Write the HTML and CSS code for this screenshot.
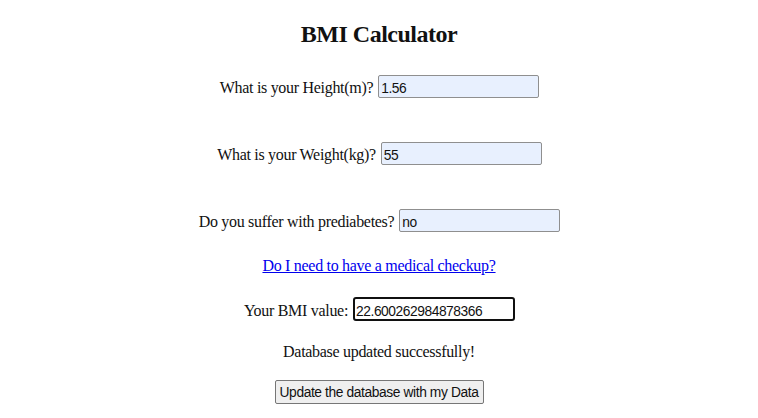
FILE: index.html
```html
<!DOCTYPE html>
<html lang="en">
<head>
<meta charset="utf-8">
<title>BMI Calculator</title>
<link rel="stylesheet" href="styles.css">
</head>
<body>
<h2 class="title">BMI Calculator</h2>
<form class="form">
  <div class="row row-height">
    <label class="label" for="height">What is your Height(m)?</label>
    <input class="field autofill" id="height" type="text" value="1.56">
  </div>
  <div class="row row-weight">
    <label class="label" for="weight">What is your Weight(kg)?</label>
    <input class="field autofill" id="weight" type="text" value="55">
  </div>
  <div class="row row-diab">
    <label class="label" for="diab">Do you suffer with prediabetes?</label>
    <input class="field autofill" id="diab" type="text" value="no">
  </div>
  <div class="line line-link"><a class="link" href="#">Do I need to have a medical checkup?</a></div>
  <div class="row row-bmi">
    <label class="label" for="bmi">Your BMI value:</label>
    <input class="field focused" id="bmi" type="text" value="22.600262984878366">
  </div>
  <div class="line line-msg">Database updated successfully!</div>
  <div class="line line-btn"><button class="btn" type="button">Update the database with my Data</button></div>
</form>
</body>
</html>
```
FILE: styles.css
```css
html, body {
  margin: 0;
  padding: 0;
  background: #ffffff;
}
body {
  font-family: "Liberation Serif", "Times New Roman", serif;
  font-size: 16px;
  letter-spacing: -0.3px;
  color: #111;
  padding-top: 20px;
}
.title {
  margin: 0;
  font-size: 24px;
  line-height: 28px;
  font-weight: bold;
  letter-spacing: -0.5px;
  text-align: center;
}
.form {
  margin: 0;
}
.row {
  display: flex;
  justify-content: center;
  align-items: baseline;
  gap: 5px;
  padding-left: 1px;
}
.label {
  line-height: 18px;
}
.field {
  box-sizing: border-box;
  width: 161px;
  height: 23px;
  margin: 0;
  padding: 5px 2px 1px 2px;
  font-family: "Liberation Sans", Arial, sans-serif;
  font-size: 13.8px;
  letter-spacing: -0.45px;
  line-height: 15px;
  color: #111;
  border: 1px solid #8f8f8f;
  border-radius: 2px;
  background: #fff;
  outline: none;
}
.autofill {
  background: #e8f0fe;
}
.focused {
  width: 162px;
  height: 24px;
  border: 2px solid #101010;
  padding: 5px 1px 1px 1px;
  border-radius: 3px;
}
.row-height { margin-top: 27px; }
.row-weight { margin-top: 44px; }
.row-diab { margin-top: 44px; }
.line {
  text-align: center;
  line-height: 18px;
}
.line-link { margin-top: 25px; }
.row-bmi { margin-top: 22px; }
.line-msg { margin-top: 22px; }
.line-btn {
  margin-top: 19px;
  line-height: 0;
}
.link {
  color: #0000ee;
  text-decoration: underline;
}
.btn {
  box-sizing: border-box;
  height: 24px;
  width: 209px;
  padding: 1px 4px;
  white-space: nowrap;
  font-family: "Liberation Sans", Arial, sans-serif;
  font-size: 13.8px;
  letter-spacing: -0.4px;
  line-height: 15px;
  color: #111;
  background: #efefef;
  border: 1px solid #767676;
  border-radius: 2px;
}
```
